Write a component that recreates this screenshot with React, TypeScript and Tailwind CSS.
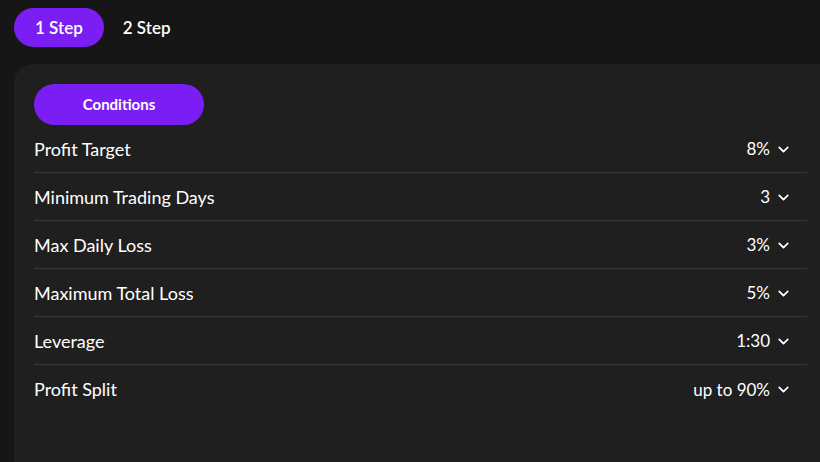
import { ChevronDown } from "lucide-react";

const rows = [
  { label: "Profit Target", value: "8%" },
  { label: "Minimum Trading Days", value: "3" },
  { label: "Max Daily Loss", value: "3%" },
  { label: "Maximum Total Loss", value: "5%" },
  { label: "Leverage", value: "1:30" },
  { label: "Profit Split", value: "up to 90%" },
];

export default function App() {
  return (
    <div className="h-[462px] w-[820px] overflow-hidden bg-[#161616] font-['Lato','Noto_Sans',sans-serif] text-white">
      <div className="flex pl-[14px] pt-[8px]">
        <button className="h-[39px] rounded-full bg-[#7b1ef4] px-[21px] text-[17px] font-semibold">
          1 Step
        </button>
        <button className="h-[39px] rounded-full px-[19px] text-[17px] font-semibold">
          2 Step
        </button>
      </div>
      <div className="ml-[14px] mt-[17px] h-[420px] rounded-tl-[20px] bg-[#1f1f1f] pl-[20px] pr-[13px] pt-[20px]">
        <button className="h-[41px] w-[170px] rounded-full bg-[#7b1ef4] text-[15px] font-bold">
          Conditions
        </button>
        <div className="flex flex-col">
          {rows.map((row, i) => (
            <div
              key={row.label}
              className={`flex h-[48px] items-center justify-between pr-[15px] pt-[1px] text-[18px] ${
                i < rows.length - 1 ? "border-b border-[#383838]" : ""
              }`}
            >
              <span>{row.label}</span>
              <span className="flex items-center gap-[5px] text-[17px]">
                {row.value}
                <ChevronDown size={17} strokeWidth={2.5} />
              </span>
            </div>
          ))}
        </div>
      </div>
    </div>
  );
}
